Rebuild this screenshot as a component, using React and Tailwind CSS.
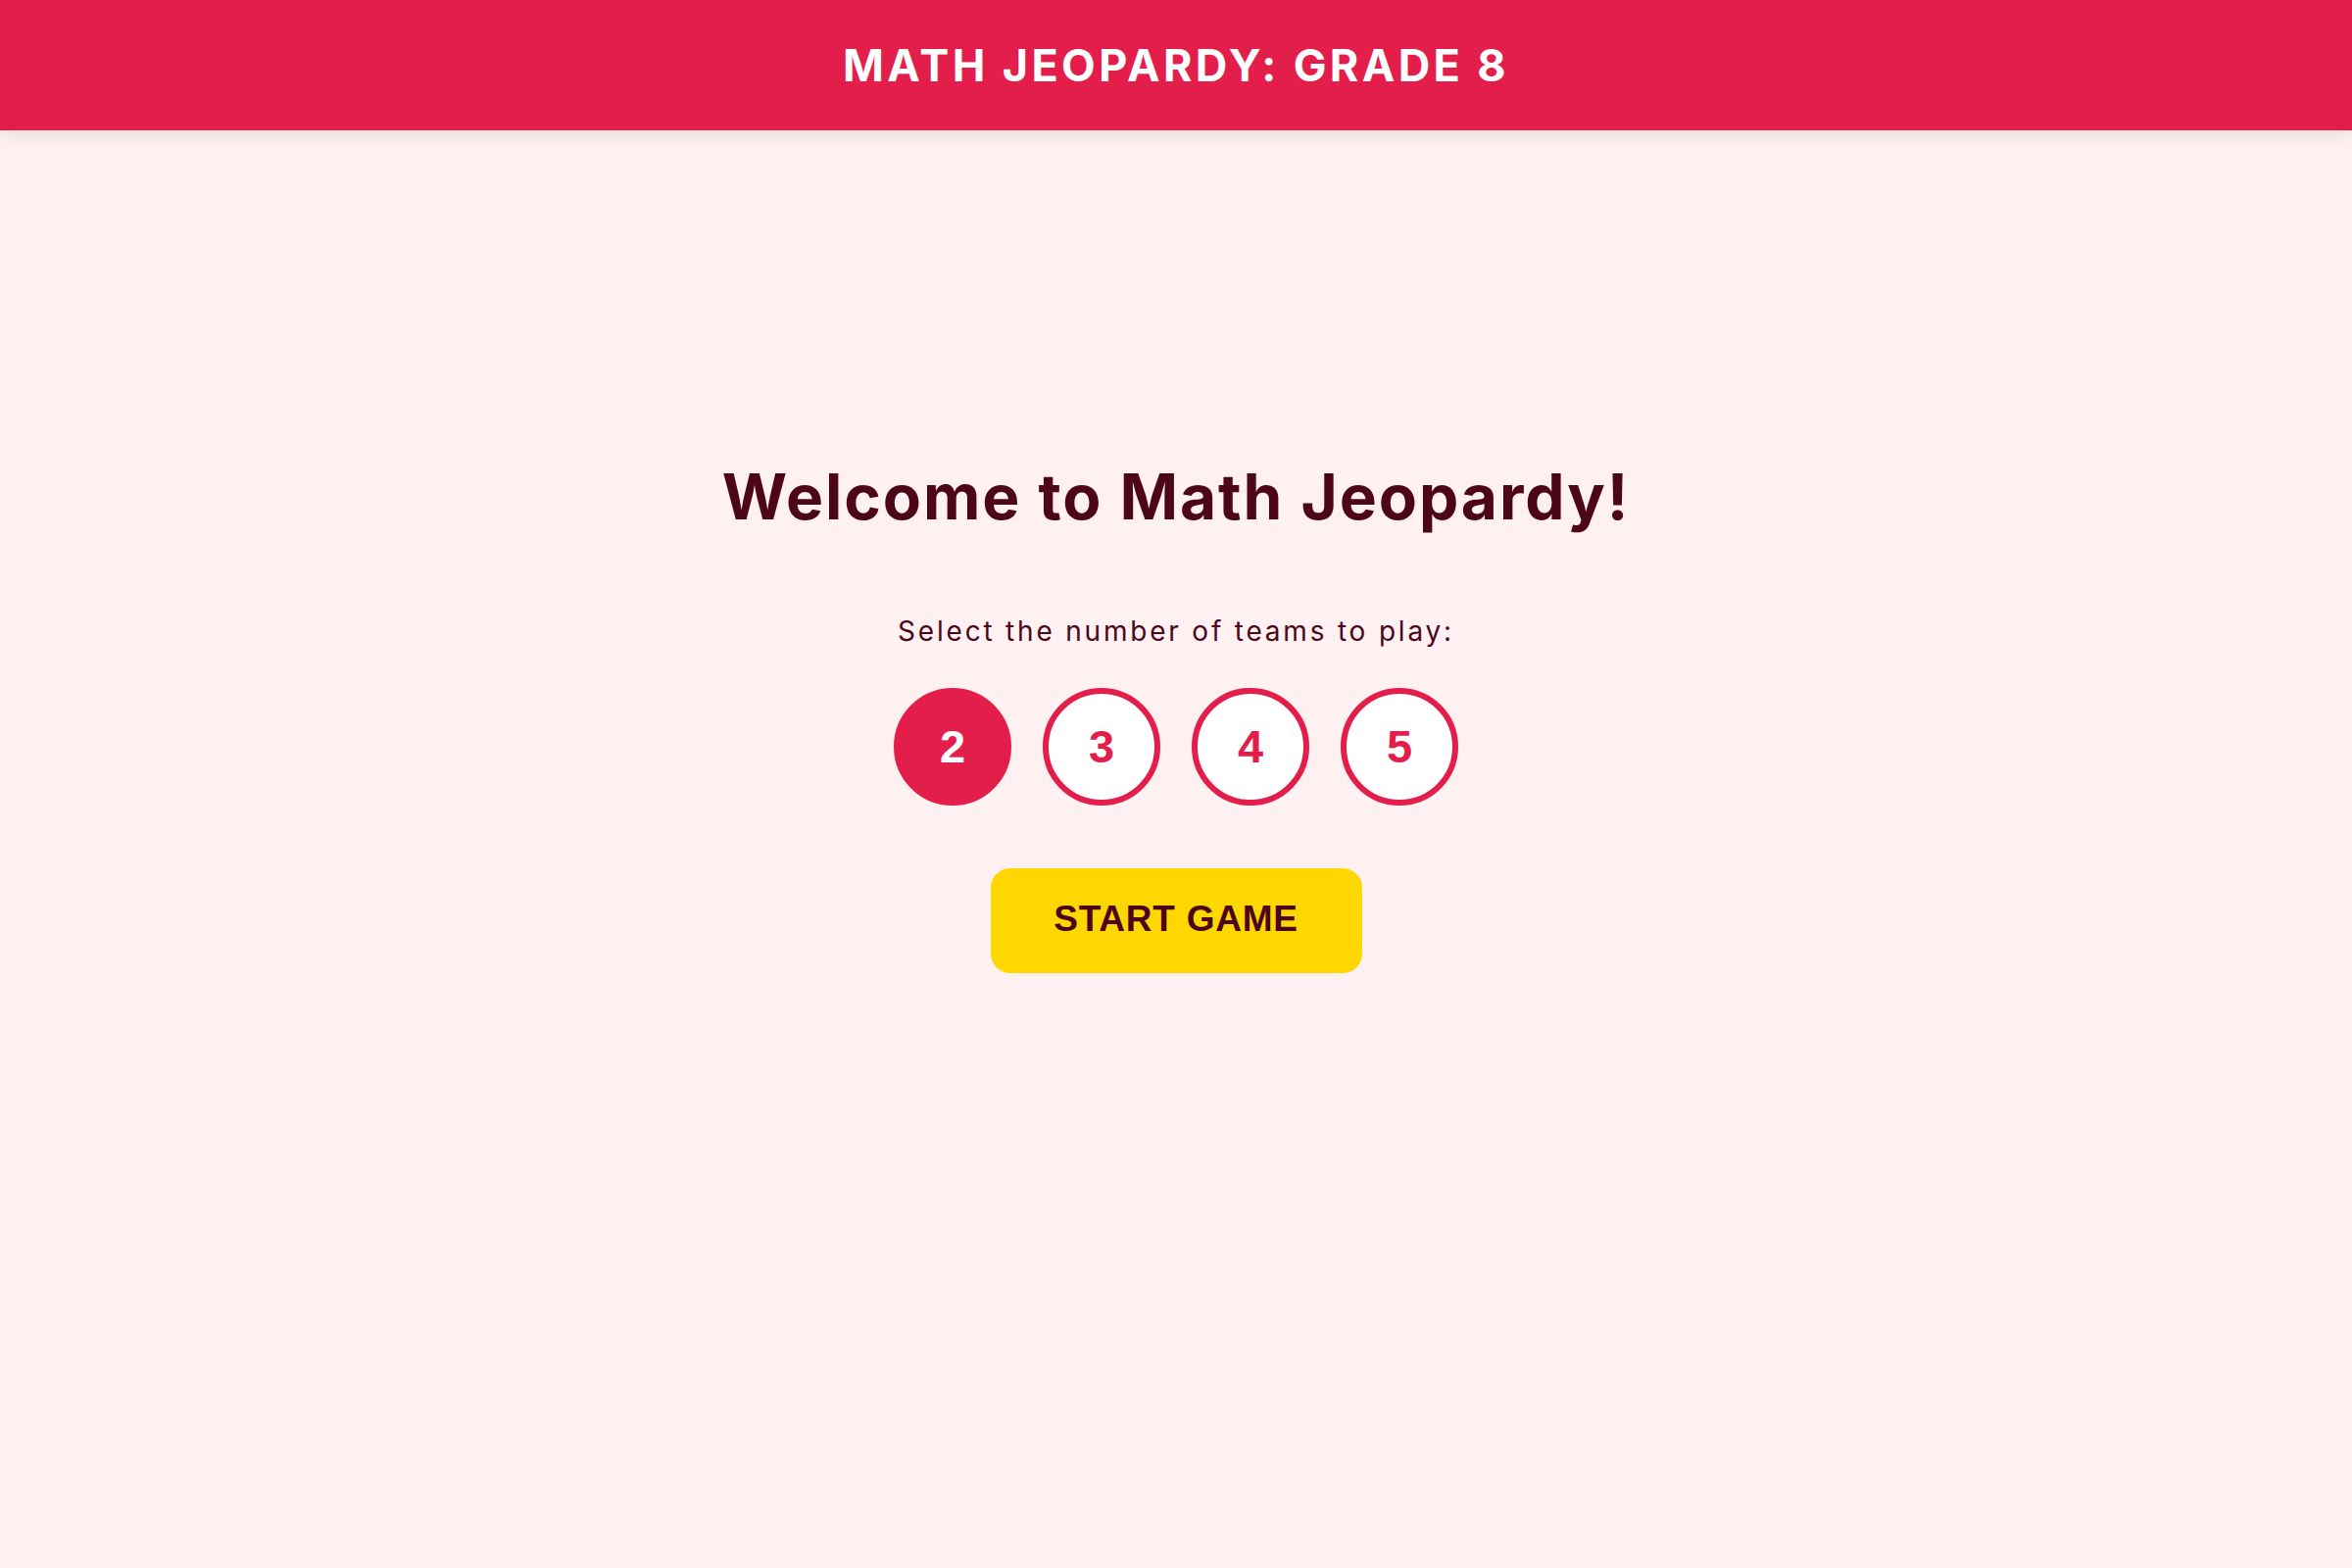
import { useState } from "react";

export default function App() {
  const [teams, setTeams] = useState(2);

  return (
    <div className="min-h-screen bg-[#fff1f2] font-['Inter',sans-serif]">
      <header className="flex h-[133px] items-center justify-center bg-[#e31e4a] shadow-[0_6px_16px_rgba(0,0,0,0.08)]">
        <h1 className="text-[45px] font-bold tracking-[0.075em] text-white">
          MATH JEOPARDY: GRADE 8
        </h1>
      </header>

      <main className="flex flex-col items-center pt-[335px]">
        <h2 className="text-[64px] leading-[77px] font-bold tracking-[0.03em] text-[#4c0519]">
          Welcome to Math Jeopardy!
        </h2>

        <p className="mt-[79px] text-[28px] leading-[41px] tracking-[0.1em] text-[#4c0519]">
          Select the number of teams to play:
        </p>

        <div className="mt-[37px] flex gap-[32px]">
          {[2, 3, 4, 5].map((n) => (
            <button
              key={n}
              onClick={() => setTeams(n)}
              className={
                n === teams
                  ? "flex h-[120px] w-[120px] items-center justify-center rounded-full border-[6px] border-[#e31e4a] bg-[#e31e4a] font-['Liberation_Sans',sans-serif] text-[47px] font-bold text-white"
                  : "flex h-[120px] w-[120px] items-center justify-center rounded-full border-[6px] border-[#e31e4a] bg-white font-['Liberation_Sans',sans-serif] text-[47px] font-bold text-[#e31e4a]"
              }
            >
              {n}
            </button>
          ))}
        </div>

        <button className="mt-[64px] flex h-[107px] w-[379px] items-center justify-center rounded-[20px] bg-[#ffd700] pb-[4px] font-['Liberation_Sans',sans-serif] text-[37px] font-bold tracking-[0.02em] text-[#4c0519]">
          START GAME
        </button>
      </main>
    </div>
  );
}
